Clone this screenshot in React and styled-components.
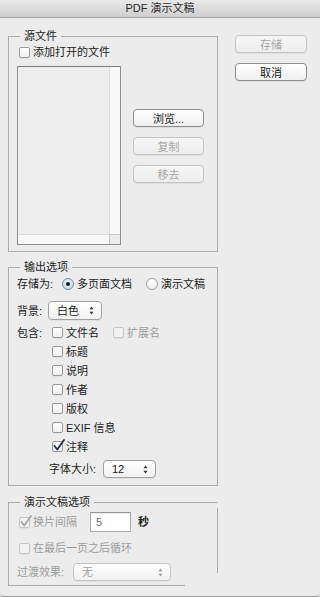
import React from "react";
import styled, { createGlobalStyle } from "styled-components";

const GlobalStyle = createGlobalStyle`
  html, body {
    margin: 0;
    padding: 0;
    background: #ececec;
  }
  body {
    font-family: "Liberation Sans", "Noto Sans CJK SC", sans-serif;
    font-size: 11px;
    color: #1c1c1c;
  }
  * {
    box-sizing: border-box;
  }
`;

const Window = styled.div`
  width: 320px;
  height: 597px;
  background: #ececec;
  display: flex;
  flex-direction: column;
  border-bottom: 1px solid #9c9c9c;
  border-radius: 0 0 4px 4px;
  overflow: hidden;
`;

const TitleBar = styled.div`
  height: 18px;
  line-height: 17px;
  text-align: center;
  font-size: 11px;
  color: #2a2a2a;
  background: linear-gradient(#e9e9e9, #cfcfcf);
  border-bottom: 1px solid #a4a4a4;
`;

const Body = styled.div`
  display: flex;
  padding: 11px 0 0 8px;
`;

const LeftCol = styled.div`
  width: 210px;
  display: flex;
  flex-direction: column;
`;

const RightCol = styled.div`
  margin: 6px 0 0 17px;
  display: flex;
  flex-direction: column;
  gap: 10px;
`;

const Group = styled.fieldset`
  position: relative;
  margin: ${(p) => p.$mt || 0}px 0 0;
  padding: ${(p) => p.$pt}px 0 ${(p) => p.$pb}px;
  border: 1px solid #ababab;
  min-width: 0;

  ${(p) =>
    p.$broken &&
    `
    border-right-color: transparent;
    border-bottom-color: transparent;
    &::before {
      content: "";
      position: absolute;
      top: -1px;
      right: -1px;
      width: 1px;
      height: 65px;
      background: #ababab;
    }
    &::after {
      content: "";
      position: absolute;
      bottom: -1px;
      left: -1px;
      width: 177px;
      height: 1px;
      background: #ababab;
    }
  `}
`;

const Legend = styled.legend`
  margin-left: 11px;
  padding: 0 4px;
  line-height: 14px;
  font-size: 11px;
  color: #1c1c1c;
`;

const Row = styled.div`
  display: flex;
  align-items: center;
  height: ${(p) => p.$h || 14}px;
  margin-top: ${(p) => p.$mt || 0}px;
  padding-left: ${(p) => p.$pl || 0}px;
  gap: ${(p) => p.$gap || 0}px;
`;

const Label = styled.span`
  display: inline-block;
  width: ${(p) => (p.$w ? `${p.$w}px` : "auto")};
  flex: none;
  line-height: 14px;
  color: ${(p) => (p.$disabled ? "#9c9c9c" : "#1c1c1c")};
  font-weight: ${(p) => (p.$strong ? 600 : 400)};
`;

const Button = styled.div`
  width: ${(p) => p.$w || 71}px;
  height: 18px;
  display: flex;
  align-items: center;
  justify-content: center;
  border-radius: 4px;
  font-size: 11px;
  border: 1px solid ${(p) => (p.$disabled ? "#c4c4c4" : "#8e8e8e")};
  color: ${(p) => (p.$disabled ? "#a6a6a6" : "#1a1a1a")};
  background: ${(p) =>
    p.$disabled
      ? "linear-gradient(#f6f6f6, #eeeeee)"
      : "linear-gradient(#ffffff, #f0f0f0)"};
  box-shadow: 0 1px 0 rgba(0, 0, 0, 0.06);
`;

const CheckItem = styled.span`
  display: inline-flex;
  align-items: center;
  gap: 3px;
  margin-left: ${(p) => p.$ml || 0}px;
`;

const Box = styled.span`
  position: relative;
  flex: none;
  width: 11px;
  height: 11px;
  border-radius: 2px;
  border: 1px solid ${(p) => (p.$disabled ? "#c6c6c6" : "#9a9a9a")};
  background: ${(p) =>
    p.$disabled ? "#f1f1f1" : "linear-gradient(#ffffff, #efefef)"};
  box-shadow: 0 1px 0 rgba(0, 0, 0, 0.04);

  svg {
    position: absolute;
    left: 0;
    top: -3px;
    overflow: visible;
  }
`;

const Check = ({ checked, disabled, children, ml }) => (
  <CheckItem $ml={ml}>
    <Box $disabled={disabled}>
      {checked && (
        <svg width="12" height="12" viewBox="0 0 12 12">
          <path
            d="M1.5 7 L4.3 10.5 L11 1"
            fill="none"
            stroke={disabled ? "#a8a8a8" : "#1f3550"}
            strokeWidth="1.9"
            strokeLinecap="round"
            strokeLinejoin="round"
          />
        </svg>
      )}
    </Box>
    {children && <Label $disabled={disabled}>{children}</Label>}
  </CheckItem>
);

const RadioItem = styled.span`
  display: inline-flex;
  align-items: center;
  gap: 3px;
  margin-left: ${(p) => p.$ml || 0}px;
`;

const RadioCircle = styled.span`
  flex: none;
  width: 12px;
  height: 12px;
  border-radius: 50%;
  display: flex;
  align-items: center;
  justify-content: center;
  border: 1px solid ${(p) => (p.$on ? "#6f8db3" : "#9a9a9a")};
  background: ${(p) =>
    p.$on
      ? "radial-gradient(circle at 50% 40%, #eef5fd, #b9d1ec)"
      : "linear-gradient(#ffffff, #efefef)"};

  &::after {
    content: "";
    display: ${(p) => (p.$on ? "block" : "none")};
    width: 4px;
    height: 4px;
    border-radius: 50%;
    background: #1a1a1a;
  }
`;

const Radio = ({ on, children, ml }) => (
  <RadioItem $ml={ml}>
    <RadioCircle $on={on} />
    <Label>{children}</Label>
  </RadioItem>
);

const SelectBox = styled.div`
  flex: none;
  display: flex;
  align-items: center;
  justify-content: space-between;
  width: ${(p) => p.$w}px;
  height: ${(p) => p.$h || 19}px;
  padding: 0 7px 0 8px;
  border: 1px solid ${(p) => (p.$disabled ? "#c4c4c4" : "#a0a0a0")};
  border-radius: 4px;
  background: linear-gradient(#ffffff, #f1f1f1);
  box-shadow: 0 1px 0 rgba(0, 0, 0, 0.05);
  color: ${(p) => (p.$disabled ? "#9c9c9c" : "#1a1a1a")};
  line-height: 14px;
`;

const Select = ({ w, h, value, disabled }) => (
  <SelectBox $w={w} $h={h} $disabled={disabled}>
    <span>{value}</span>
    <svg width="5" height="9" viewBox="0 0 5 9">
      <path
        d="M2.5 0.5 L4.5 3.3 H0.5 Z M2.5 8.5 L0.5 5.7 H4.5 Z"
        fill={disabled ? "#9a9a9a" : "#333"}
      />
    </svg>
  </SelectBox>
);

const ListRow = styled.div`
  display: flex;
  margin-top: 7px;
  padding-left: 8px;
`;

const ListBox = styled.div`
  width: 104px;
  height: 179px;
  display: grid;
  grid-template-columns: 1fr 11px;
  grid-template-rows: 1fr 10px;
  border: 1px solid #8f8f8f;
  border-top-color: #7f7f7f;
  background: #ededed;
`;

const ListArea = styled.div`
  background: #eeeeee;
`;

const VTrack = styled.div`
  background: #f8f8f8;
  border-left: 1px solid #dcdcdc;
`;

const HTrack = styled.div`
  background: #f8f8f8;
  border-top: 1px solid #dcdcdc;
`;

const Corner = styled.div`
  background: #ebebeb;
  border-top: 1px solid #c8c8c8;
  border-left: 1px solid #c8c8c8;
`;

const SideButtons = styled.div`
  display: flex;
  flex-direction: column;
  gap: 10px;
  margin: 43px 0 0 12px;
`;

const IncludeBlock = styled.div`
  display: flex;
  margin-top: 3px;
  padding-left: 8px;
`;

const IncludeList = styled.div`
  display: flex;
  flex-direction: column;
`;

const IncludeRow = styled.div`
  display: flex;
  align-items: center;
  height: 19px;
`;

const TextInput = styled.div`
  flex: none;
  width: 41px;
  height: 20px;
  padding-left: 5px;
  display: flex;
  align-items: center;
  border: 1px solid #a9a9a9;
  border-top-color: #969696;
  background: #ffffff;
  box-shadow: inset 0 1px 1px rgba(0, 0, 0, 0.08);
  color: #6f6f6f;
  font-size: 11px;
`;

export default function App() {
  return (
    <>
      <GlobalStyle />
      <Window>
        <TitleBar>PDF 演示文稿</TitleBar>
        <Body>
          <LeftCol>
            <Group $pt={2} $pb={6}>
              <Legend>源文件</Legend>
              <Row $pl={10}>
                <Check>添加打开的文件</Check>
              </Row>
              <ListRow>
                <ListBox>
                  <ListArea />
                  <VTrack />
                  <HTrack />
                  <Corner />
                </ListBox>
                <SideButtons>
                  <Button>浏览...</Button>
                  <Button $disabled>复制</Button>
                  <Button $disabled>移去</Button>
                </SideButtons>
              </ListRow>
            </Group>

            <Group $mt={8} $pt={2} $pb={7}>
              <Legend>输出选项</Legend>
              <Row $h={16} $pl={8}>
                <Label $w={45}>存储为:</Label>
                <Radio on>多页面文档</Radio>
                <Radio ml={14}>演示文稿</Radio>
              </Row>
              <Row $h={19} $mt={9} $pl={8}>
                <Label $w={31}>背景:</Label>
                <Select w={54} value="白色" />
              </Row>
              <IncludeBlock>
                <Label $w={35} style={{ marginTop: 3 }}>
                  包含:
                </Label>
                <IncludeList>
                  <IncludeRow>
                    <Check>文件名</Check>
                    <Check disabled ml={14}>
                      扩展名
                    </Check>
                  </IncludeRow>
                  <IncludeRow>
                    <Check>标题</Check>
                  </IncludeRow>
                  <IncludeRow>
                    <Check>说明</Check>
                  </IncludeRow>
                  <IncludeRow>
                    <Check>作者</Check>
                  </IncludeRow>
                  <IncludeRow>
                    <Check>版权</Check>
                  </IncludeRow>
                  <IncludeRow>
                    <Check>EXIF 信息</Check>
                  </IncludeRow>
                  <IncludeRow>
                    <Check checked>注释</Check>
                  </IncludeRow>
                </IncludeList>
              </IncludeBlock>
              <Row $h={18} $mt={4} $pl={40}>
                <Label $w={54}>字体大小:</Label>
                <Select w={53} h={18} value="12" />
              </Row>
            </Group>

            <Group $mt={9} $pt={3} $pb={4} $broken>
              <Legend>演示文稿选项</Legend>
              <Row $h={20} $pl={10}>
                <Check checked disabled>
                  换片间隔
                </Check>
                <span style={{ width: 13 }} />
                <TextInput>5</TextInput>
                <Label style={{ marginLeft: 7 }} $strong>
                  秒
                </Label>
              </Row>
              <Row $mt={9} $pl={10}>
                <Check disabled>在最后一页之后循环</Check>
              </Row>
              <Row $h={18} $mt={8} $pl={8}>
                <Label $w={56} $disabled>
                  过渡效果:
                </Label>
                <Select w={98} h={18} value="无" disabled />
              </Row>
            </Group>
          </LeftCol>

          <RightCol>
            <Button $w={72} $disabled>
              存储
            </Button>
            <Button $w={72}>取消</Button>
          </RightCol>
        </Body>
      </Window>
    </>
  );
}
